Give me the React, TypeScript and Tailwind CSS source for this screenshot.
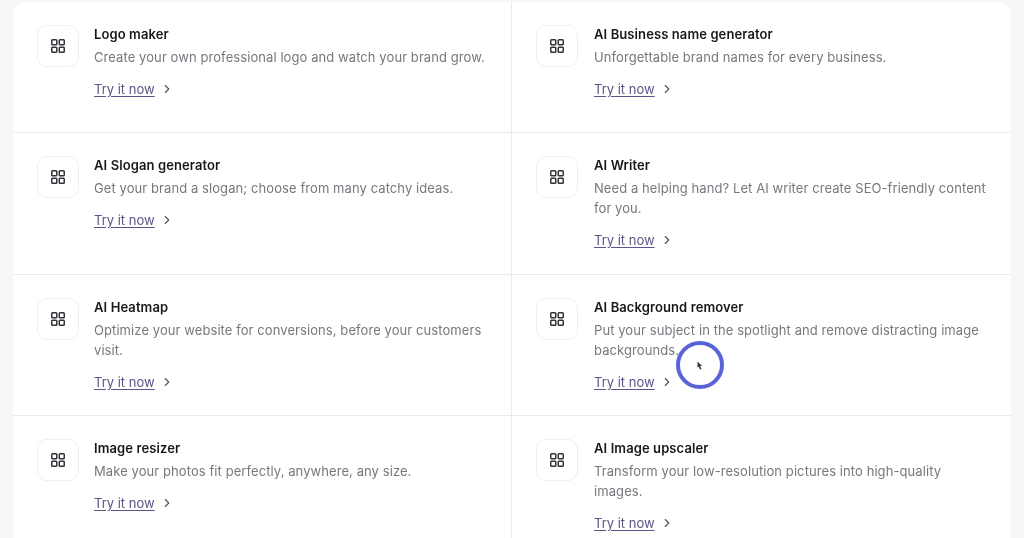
import { ChevronRight } from "lucide-react";

interface Tool {
  title: string;
  desc: string;
}

const tools: Tool[] = [
  { title: "Logo maker", desc: "Create your own professional logo and watch your brand grow." },
  { title: "AI Business name generator", desc: "Unforgettable brand names for every business." },
  { title: "AI Slogan generator", desc: "Get your brand a slogan; choose from many catchy ideas." },
  { title: "AI Writer", desc: "Need a helping hand? Let AI writer create SEO-friendly content for you." },
  { title: "AI Heatmap", desc: "Optimize your website for conversions, before your customers visit." },
  { title: "AI Background remover", desc: "Put your subject in the spotlight and remove distracting image backgrounds." },
  { title: "Image resizer", desc: "Make your photos fit perfectly, anywhere, any size." },
  { title: "AI Image upscaler", desc: "Transform your low-resolution pictures into high-quality images." },
];

const GridIcon = () => (
  <svg width="14" height="14" viewBox="0 0 14 14" fill="none" stroke="#33343a" strokeWidth="1.5">
    <rect x="0.75" y="0.75" width="5" height="5" rx="0.8" />
    <rect x="8.25" y="0.75" width="5" height="5" rx="0.8" />
    <rect x="0.75" y="8.25" width="5" height="5" rx="0.8" />
    <rect x="8.25" y="8.25" width="5" height="5" rx="0.8" />
  </svg>
);

const ToolCell = ({ tool, index }: { tool: Tool; index: number }) => {
  const isLeft = index % 2 === 0;
  const isLastRow = index >= 6;
  return (
    <div
      className={`flex pl-6 pt-[23px] ${
        isLeft ? "gap-[15px] border-r border-[#e9eaec]" : "gap-4"
      } ${isLastRow ? "" : "border-b border-[#e9eaec]"}`}
    >
      <div className="flex size-[42px] shrink-0 items-center justify-center rounded-[10px] border border-[#efeff1] bg-white">
        <GridIcon />
      </div>
      <div className="-mt-[1px] min-w-0 pr-[23px]">
        <div className="text-[13px] leading-5 font-semibold text-[#17181c] tracking-[0.1px]">
          {tool.title}
        </div>
        <p className="mt-[3px] text-[13px] leading-5 text-[#77787e] tracking-[0.08px]">
          {tool.desc}
        </p>
        <div className="mt-[12px] flex items-center gap-[5px]">
          <a className="text-[13px] leading-5 text-[#5a5688] underline underline-offset-2">
            Try it now
          </a>
          <ChevronRight className="size-[14px] text-[#55565c]" strokeWidth={2} />
        </div>
      </div>
    </div>
  );
};

export default function App() {
  return (
    <div
      className="relative h-[538px] w-[1024px] overflow-hidden bg-[#f6f7f9] pt-[2px] pl-[13px] pr-[13px] blur-[0.5px]"
      style={{ fontFamily: "Inter, 'Liberation Sans', sans-serif" }}
    >
      <div className="grid h-[560px] grid-cols-[499px_499px] grid-rows-[131px_142px_141px_145px] rounded-t-xl bg-white">
        {tools.map((tool, i) => (
          <ToolCell key={tool.title} tool={tool} index={i} />
        ))}
      </div>
      {/* click highlight over the page */}
      <div className="absolute left-[676px] top-[341px] size-[48px] rounded-full border-[4px] border-[#5a62d8]" />
      <svg className="absolute left-[697px] top-[361px]" width="6" height="9" viewBox="0 0 6 9">
        <path d="M0.5 0.5 L5 5 L3 5 L4.5 8 L3 8.5 L1.5 5.5 L0.5 6.5 Z" fill="#33343a" />
      </svg>
    </div>
  );
}
